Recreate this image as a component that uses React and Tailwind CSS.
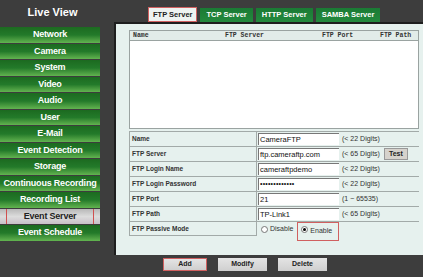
import React from 'react'

const menu = [
  'Network',
  'Camera',
  'System',
  'Video',
  'Audio',
  'User',
  'E-Mail',
  'Event Detection',
  'Storage',
  'Continuous Recording',
  'Recording List',
  'Event Server',
  'Event Schedule',
]

const tabs = ['FTP Server', 'TCP Server', 'HTTP Server', 'SAMBA Server']

const rows = [
  { label: 'Name', value: 'CameraFTP', hint: '(< 22 Digits)' },
  { label: 'FTP Server', value: 'ftp.cameraftp.com', hint: '(< 65 Digits)', test: true },
  { label: 'FTP Login Name', value: 'cameraftpdemo', hint: '(< 22 Digits)' },
  { label: 'FTP Login Password', value: '•••••••••••••', hint: '(< 22 Digits)', pw: true },
  { label: 'FTP Port', value: '21', hint: '(1 ~ 65535)' },
  { label: 'FTP Path', value: 'TP-Link1', hint: '(< 65 Digits)' },
]

function Radio({ checked }) {
  return (
    <span className="inline-flex w-[7px] h-[7px] rounded-full bg-white border border-[#777] items-center justify-center">
      {checked && <span className="w-[3px] h-[3px] rounded-full bg-black" />}
    </span>
  )
}

export default function App() {
  return (
    <div
      className="w-[423px] h-[277px] bg-[#3d3d3d] flex overflow-hidden"
      style={{ fontFamily: '"Liberation Sans", Arial, sans-serif' }}
    >
      {/* Sidebar */}
      <div className="w-[100px] flex flex-col">
        <div className="h-[27px] flex items-center justify-center text-white font-bold text-[11px] pl-[5px] pb-[2px]">
          Live View
        </div>
        <div className="flex flex-col gap-px">
          {menu.map((m) =>
            m === 'Event Server' ? (
              <div key={m} className="h-[15.5px] bg-gradient-to-b from-[#b8b8b8] via-[#dcdcdc] to-[#c8c0c8] px-[6px] flex">
                <div className="flex-1 border-x border-[#d05050] flex items-center justify-center text-[#222] font-bold text-[9px] tracking-[-0.2px]">
                  {m}
                </div>
              </div>
            ) : (
              <div
                key={m}
                className="h-[15.5px] bg-gradient-to-b from-[#1c6a20] via-[#237a2a] to-[#62b450] flex items-center justify-center text-white font-bold text-[9px] tracking-[-0.2px] whitespace-nowrap"
              >
                {m}
              </div>
            )
          )}
        </div>
      </div>

      {/* Main */}
      <div className="flex-1 flex flex-col pl-[14px]">
        <div className="h-[22px] flex items-end pl-[34px] gap-[3px]">
          {tabs.map((t, i) =>
            i === 0 ? (
              <div key={t} className="h-[15px] px-[4px] bg-[#eef3f1] border border-[#d06060] flex items-center text-[7.5px] font-bold text-[#222]">
                {t}
              </div>
            ) : (
              <div key={t} className="h-[14px] px-[6px] bg-gradient-to-b from-[#1a7a34] to-[#238a3e] flex items-center text-[7.5px] font-bold text-white">
                {t}
              </div>
            )
          )}
        </div>

        <div className="h-[233px] bg-[#e6f1ee] border-l-2 border-t-2 border-[#1e1e1e] pl-[13px] pr-[4px] pt-[6px] flex flex-col">
          {/* list */}
          <div className="h-[99px] bg-white border border-[#9aa3a1] flex flex-col">
            <div
              className="h-[10px] bg-[#e2ece9] border-b border-[#9aa3a1] flex items-center text-[6.5px] font-bold text-[#333]"
              style={{ fontFamily: '"Liberation Mono", monospace' }}
            >
              <span className="w-[95px] pl-[3px]">Name</span>
              <span className="w-[97px]">FTP Server</span>
              <span className="w-[58px]">FTP Port</span>
              <span>FTP Path</span>
            </div>
          </div>

          {/* form */}
          <div className="mt-[2px] flex flex-col">
            {rows.map((r) => (
              <div key={r.label} className="h-[15px] flex border-t border-[#a2aaa8]">
                <div className="w-[128px] border-l border-r border-[#a2aaa8] flex items-center pl-[2px] text-[6.5px] font-bold text-[#333]">
                  {r.label}
                </div>
                <div className="w-[83px] flex items-center pl-[1px]">
                  <div className="w-[81px] h-[12px] bg-white border-t border-l border-[#777] flex items-center pl-[1px] text-[7.5px] text-[#111]">
                    {r.pw ? <span className="text-[7px] tracking-[0.2px]">{r.value}</span> : r.value}
                  </div>
                </div>
                <div className="flex-1 flex items-center pl-[2px] text-[7px] text-[#333]">
                  {r.hint}
                  {r.test && (
                    <span className="ml-[4px] h-[12px] px-[4px] bg-[#d6d2cc] border border-[#999] flex items-center font-bold text-[7px] text-[#222]">
                      Test
                    </span>
                  )}
                </div>
              </div>
            ))}
            <div className="h-[15px] flex border-t border-[#a2aaa8]">
              <div className="w-[128px] border-l border-r border-b border-[#a2aaa8] flex items-center pl-[2px] text-[6.5px] font-bold text-[#333]">
                FTP Passive Mode
              </div>
              <div className="flex items-center pl-[4px] text-[7px] text-[#333] gap-[2px]">
                <Radio />
                <span>Disable</span>
                <div className="ml-[2px] h-[19px] mt-[5px] w-[42px] border border-[#d06060] flex items-start pt-[3px] pl-[3px] gap-[2px]">
                  <Radio checked />
                  <span>Enable</span>
                </div>
              </div>
            </div>
          </div>
        </div>

        {/* buttons */}
        <div className="flex pl-[49px] pt-[3px] gap-[11px]">
          <div className="w-[44px] h-[13px] bg-gradient-to-b from-[#e4e4e4] to-[#cfcfcf] border border-[#d06060] flex items-center justify-center text-[7px] font-bold text-[#222]">
            Add
          </div>
          <div className="w-[49px] h-[13px] bg-gradient-to-b from-[#e4e4e4] to-[#cfcfcf] flex items-center justify-center text-[7px] font-bold text-[#222]">
            Modify
          </div>
          <div className="w-[49px] h-[13px] bg-gradient-to-b from-[#e4e4e4] to-[#cfcfcf] flex items-center justify-center text-[7px] font-bold text-[#222]">
            Delete
          </div>
        </div>
      </div>
    </div>
  )
}
